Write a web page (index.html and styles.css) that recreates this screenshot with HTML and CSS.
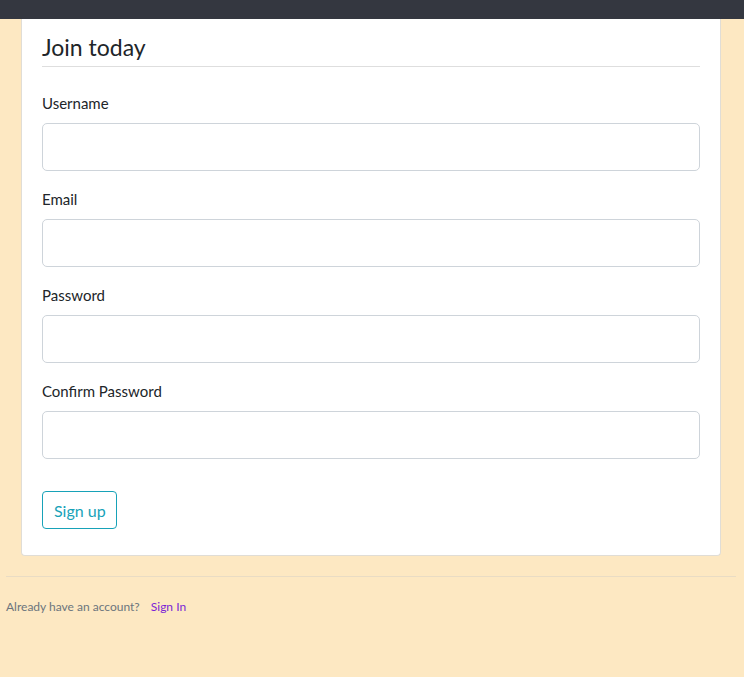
FILE: index.html
```html
<!DOCTYPE html>
<html>
<head>
<meta charset="utf-8">
<link rel="stylesheet" href="styles.css">
</head>
<body>
<div class="navbar"></div>
<main class="page">
  <div class="card">
    <h2 class="title">Join today</h2>
    <form class="form">
      <div class="group">
        <label class="label">Username</label>
        <input class="input" type="text">
      </div>
      <div class="group">
        <label class="label">Email</label>
        <input class="input" type="text">
      </div>
      <div class="group">
        <label class="label">Password</label>
        <input class="input" type="password">
      </div>
      <div class="group">
        <label class="label">Confirm Password</label>
        <input class="input" type="password">
      </div>
      <button class="btn" type="button">Sign up</button>
    </form>
  </div>
  <div class="footer">
    <small class="muted">Already have an account? <a class="link" href="#">Sign In</a></small>
  </div>
</main>
</body>
</html>
```
FILE: styles.css
```css
* { box-sizing: border-box; }
html, body { margin: 0; padding: 0; }
body {
  background: #fde8c2;
  font-family: "Lato", "Liberation Sans", sans-serif;
  color: #212529;
  font-size: 15px;
}
.navbar {
  height: 19px;
  background: #343740;
}
.page {
  padding: 0 8px 0 6px;
}
.card {
  margin: 0 15px 0 15px;
  background: #fff;
  border: 1px solid #e0ddd6;
  border-top: none;
  border-radius: 0 0 4px 4px;
  padding: 10px 20px 26px 20px;
}
.title {
  margin: 0;
  font-weight: 400;
  font-size: 23px;
  line-height: 36px;
  border-bottom: 1px solid #dedede;
  height: 38px;
}
.form {
  display: flex;
  flex-direction: column;
  padding-top: 25px;
}
.group {
  display: flex;
  flex-direction: column;
  margin-bottom: 20px;
}
.label {
  font-size: 15px;
  line-height: 22px;
  margin-bottom: 9px;
}
.input {
  height: 48px;
  border: 1px solid #ced4da;
  border-radius: 5px;
  background: #fff;
  width: 100%;
}
.input + .label { margin-top: 0; }
.group + .group { margin-top: -3px; }
.btn {
  align-self: flex-start;
  margin-top: 12px;
  height: 38px;
  padding: 0 10px 0 11px;
  background: #fff;
  color: #17a2b8;
  border: 1px solid #17a2b8;
  border-radius: 4px;
  font-family: inherit;
  font-size: 16px;
}
.footer {
  margin-top: 20px;
  border-top: 1px solid #e9dcc4;
  padding-top: 19px;
}
.muted {
  color: #6c757d;
  font-size: 12px;
}
.link {
  color: #7b1fd6;
  text-decoration: none;
  margin-left: 8px;
}
```
